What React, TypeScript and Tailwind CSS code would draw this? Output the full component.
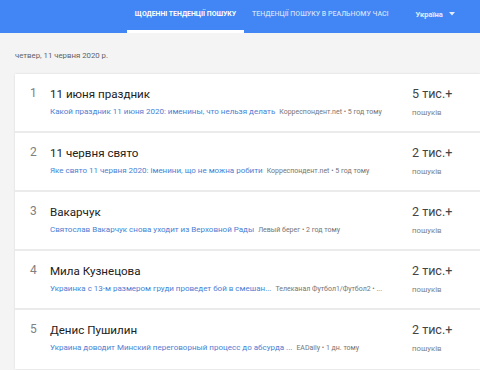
import React from "react";

type Trend = {
  rank: number;
  title: string;
  article: string;
  source: string;
  count: string;
};

const trends: Trend[] = [
  {
    rank: 1,
    title: "11 июня праздник",
    article: "Какой праздник 11 июня 2020: именины, что нельзя делать",
    source: "Корреспондент.net • 5 год тому",
    count: "5 тис.+",
  },
  {
    rank: 2,
    title: "11 червня свято",
    article: "Яке свято 11 червня 2020: іменини, що не можна робити",
    source: "Корреспондент.net • 5 год тому",
    count: "2 тис.+",
  },
  {
    rank: 3,
    title: "Вакарчук",
    article: "Святослав Вакарчук снова уходит из Верховной Рады",
    source: "Левый берег • 2 год тому",
    count: "2 тис.+",
  },
  {
    rank: 4,
    title: "Мила Кузнецова",
    article: "Украинка с 13-м размером груди проведет бой в смешан...",
    source: "Телеканал Футбол1/Футбол2 • ...",
    count: "2 тис.+",
  },
  {
    rank: 5,
    title: "Денис Пушилин",
    article: "Украина доводит Минский переговорный процесс до абсурда ...",
    source: "EADaily • 1 дн. тому",
    count: "2 тис.+",
  },
];

function TrendRow({ t }: { t: Trend }) {
  return (
    <div className="flex h-[59px] border-b-2 border-[#ebebeb] last:border-b-0">
      <div className="w-[35px] shrink-0 pt-[12px] pl-[15px] text-[12px] leading-[15px] text-[#808080]">
        {t.rank}
      </div>
      <div className="flex-1 min-w-0 pt-[12px]">
        <div className="text-[11.6px] leading-[16px] text-[#212121]">{t.title}</div>
        <div className="mt-[5px] flex items-baseline gap-[4px] whitespace-nowrap leading-[10px]">
          <span className="text-[8px] text-[#4a7fd4]">{t.article}</span>
          <span className="text-[7px] text-[#757575]">{t.source}</span>
        </div>
      </div>
      <div className="w-[68px] shrink-0 pt-[12px]">
        <div className="text-[12.5px] leading-[15px] text-[#444]">{t.count}</div>
        <div className="mt-[7px] text-[7.8px] leading-[10px] text-[#808080]">пошуків</div>
      </div>
    </div>
  );
}

export default function App() {
  return (
    <div className="w-[480px] h-[370px] overflow-hidden bg-[#f4f4f4] font-['Roboto',sans-serif]">
      {/* Top bar */}
      <div className="h-[33px] bg-[#4285f4] flex items-stretch pl-[127px]">
        <div className="w-[117px] flex items-start justify-center border-b-[3px] border-white pt-[9px] text-[6.9px] font-bold uppercase text-white whitespace-nowrap">
          Щоденні тенденції пошуку
        </div>
        <div className="ml-[8px] flex items-start pt-[9px] text-[7px] font-medium uppercase text-white/75 whitespace-nowrap">
          Тенденції пошуку в реальному часі
        </div>
        <div className="ml-[27px] flex items-start pt-[9px] gap-[6px] text-[7.5px] font-bold text-white/85">
          Україна
          <svg width="6" height="4" viewBox="0 0 6 4" className="mt-[3px]">
            <path d="M0 0h6L3 3.5z" fill="rgba(255,255,255,0.85)" />
          </svg>
        </div>
      </div>

      {/* Date */}
      <div className="pl-[15px] pt-[18px] text-[7.8px] leading-[10px] text-[#5f6368]">
        четвер, 11 червня 2020 р.
      </div>

      {/* Card */}
      <div className="ml-[15px] mt-[13px] bg-white shadow-[0_0_2px_rgba(0,0,0,0.12)]">
        {trends.map((t) => (
          <TrendRow key={t.rank} t={t} />
        ))}
      </div>
    </div>
  );
}
